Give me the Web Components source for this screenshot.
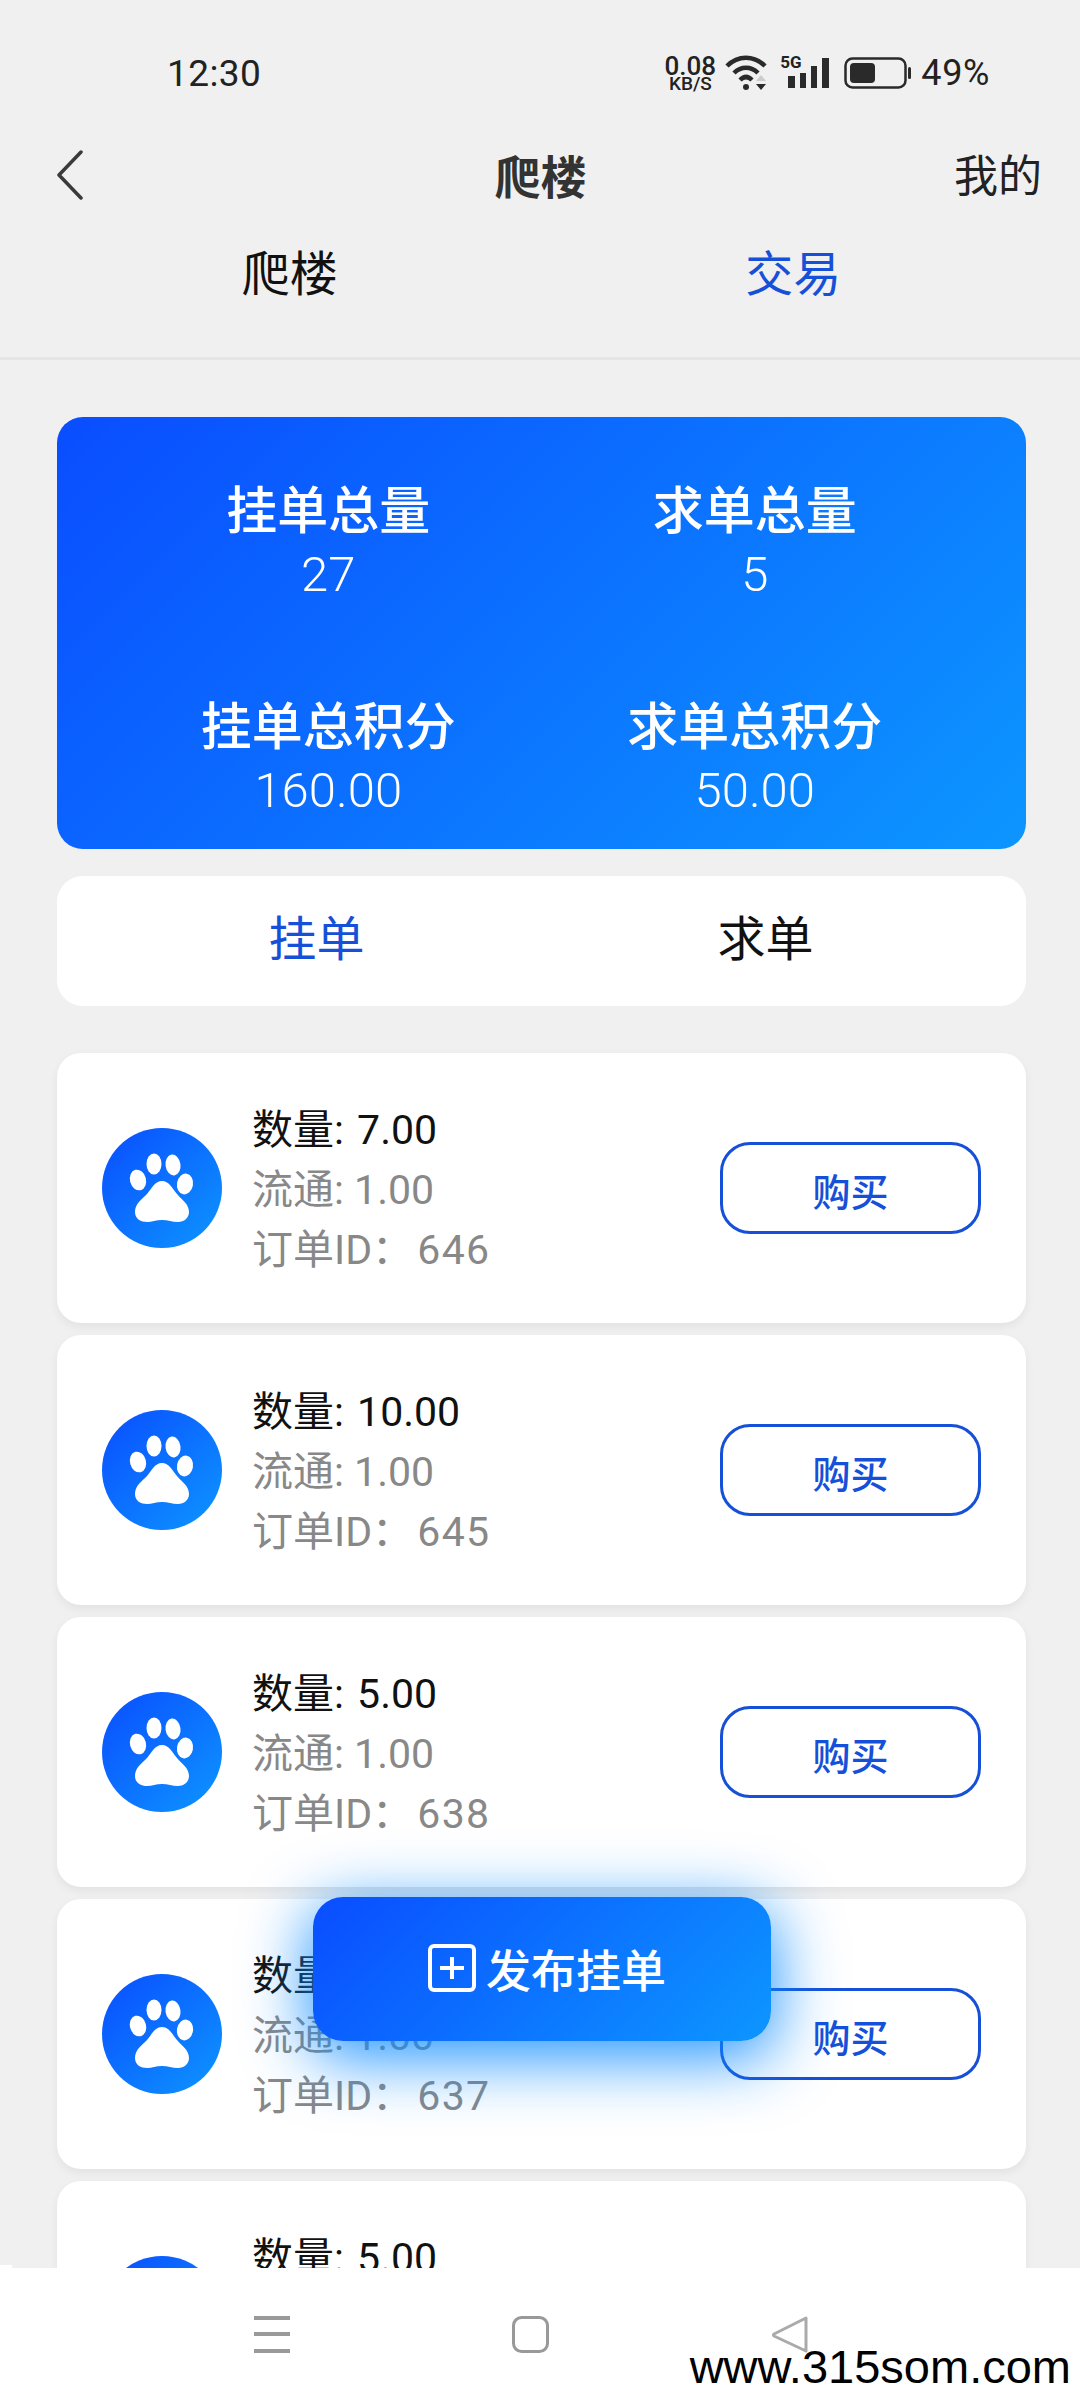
<!DOCTYPE html>
<html>
<head>
<meta charset="utf-8">
<style>
  html, body { margin: 0; padding: 0; background: #f0f0f0; }
</style>
</head>
<body>
<app-screen>
  <status-bar slot="top"></status-bar>
  <nav-header slot="top" title="爬楼" action="我的"></nav-header>
  <top-tabs slot="top">
    <span>爬楼</span>
    <span class="on">交易</span>
  </top-tabs>

  <stats-card>
    <stat-item label="挂单总量" value="27"></stat-item>
    <stat-item label="求单总量" value="5"></stat-item>
    <stat-item label="挂单总积分" value="160.00"></stat-item>
    <stat-item label="求单总积分" value="50.00"></stat-item>
  </stats-card>

  <seg-tabs active="挂单" other="求单"></seg-tabs>

  <order-list>
    <order-card amount="7.00" flow="1.00" order="646"></order-card>
    <order-card amount="10.00" flow="1.00" order="645"></order-card>
    <order-card amount="5.00" flow="1.00" order="638"></order-card>
    <order-card amount="5.00" flow="1.00" order="637"></order-card>
    <order-card amount="5.00" flow="1.00" order="636"></order-card>
  </order-list>

  <publish-button slot="over">发布挂单</publish-button>
  <system-nav slot="bottom"></system-nav>
</app-screen>

<script>
const FONT = '"Roboto", "Noto Sans CJK SC", sans-serif';
const BLUE = '#1650d8';
const GRADIENT = 'linear-gradient(135deg, #0a4dff 0%, #0d96ff 100%)';

class AppScreen extends HTMLElement {
  constructor() {
    super();
    this.attachShadow({ mode: 'open' }).innerHTML = `
      <style>
        :host { display: flex; flex-direction: column; position: relative; width: 1080px; height: 2400px;
                overflow: hidden; background: #f0f0f0; font-family: ${FONT}; }
        #body { flex: 1; min-height: 0; overflow: hidden; padding: 57px 54px 0 57px; }
      </style>
      <slot name="top"></slot>
      <div id="body"><slot></slot></div>
      <slot name="bottom"></slot>
      <slot name="over"></slot>
    `;
  }
}

class StatusBar extends HTMLElement {
  constructor() {
    super();
    this.attachShadow({ mode: 'open' }).innerHTML = `
      <style>
        :host { display: flex; align-items: center; justify-content: space-between; box-sizing: border-box;
                height: 120px; padding: 26px 90px 0 167px; color: #222; }
        #time { font-size: 37px; letter-spacing: .4px; }
        #right { display: flex; align-items: center; }
        #speed { display: flex; flex-direction: column; align-items: center; width: 56px; margin-right: 7px;
                 font-weight: 500; line-height: 1; }
        #speed b { font-weight: 500; font-size: 26px; line-height: 20px; }
        #speed i { font-style: normal; font-size: 19px; line-height: 15px; }
        svg { display: block; }
        #five { position: relative; width: 50px; height: 34px; margin-left: 15px; }
        #five span { position: absolute; left: -4px; top: -4px; font-size: 17px; font-weight: 700; line-height: 20px; }
        #pct { font-size: 36px; letter-spacing: .6px; margin-left: 9px; }
      </style>
      <span id="time">12:30</span>
      <div id="right">
        <div id="speed"><b>0.08</b><i>KB/S</i></div>
        <svg width="44" height="36" viewBox="0 0 44 36">
          <path d="M2 11 C13 0 29 0 40 11" fill="none" stroke="#2a2a2a" stroke-width="4.5"/>
          <path d="M9 18 C16 11 26 11 33 18" fill="none" stroke="#2a2a2a" stroke-width="4.5"/>
          <path d="M15 25 C19 21 23 21 27 25" fill="none" stroke="#2a2a2a" stroke-width="4.5"/>
          <circle cx="21" cy="32" r="3" fill="#2a2a2a"/>
          <path d="M36 20 L41 26 L31 26Z" fill="#ccc"/>
          <path d="M31 29 L41 29 L36 35Z" fill="#2a2a2a"/>
        </svg>
        <div id="five">
          <span>5G</span>
          <svg width="50" height="34" viewBox="0 0 50 34" style="position:absolute;left:0;top:0">
            <rect x="4" y="20" width="7" height="12" fill="#2a2a2a"/>
            <rect x="16" y="17" width="6" height="15" fill="#2a2a2a"/>
            <rect x="27" y="10" width="6" height="22" fill="#2a2a2a"/>
            <rect x="38" y="2" width="7" height="30" fill="#2a2a2a"/>
          </svg>
        </div>
        <svg width="68" height="32" viewBox="0 0 68 32" style="margin-left:10px">
          <rect x="1.5" y="1.5" width="60" height="29" rx="7" fill="none" stroke="#2a2a2a" stroke-width="2.5"/>
          <rect x="6" y="6" width="25" height="20" rx="4" fill="#2a2a2a"/>
          <rect x="64" y="10" width="3" height="12" rx="1.5" fill="#2a2a2a"/>
        </svg>
        <span id="pct">49%</span>
      </div>
    `;
  }
}

class NavHeader extends HTMLElement {
  constructor() {
    super();
    this.attachShadow({ mode: 'open' }).innerHTML = `
      <style>
        :host { display: grid; grid-template-columns: 1fr auto 1fr; align-items: center; box-sizing: border-box;
                height: 110px; padding: 0 38px 0 39px; }
        svg { display: block; margin-left: 17px; }
        #title { font-size: 46px; font-weight: 700; color: #333; padding-bottom: 2px; }
        #action { justify-self: end; font-size: 44px; color: #222; padding-bottom: 5px; }
      </style>
      <svg width="28" height="50" viewBox="0 0 28 50">
        <path d="M25 2 L3 25 L25 48" fill="none" stroke="#3a3a3a" stroke-width="3.5" stroke-linecap="round" stroke-linejoin="round"/>
      </svg>
      <span id="title">${this.getAttribute('title')}</span>
      <span id="action">${this.getAttribute('action')}</span>
    `;
  }
}

class TopTabs extends HTMLElement {
  constructor() {
    super();
    this.attachShadow({ mode: 'open' }).innerHTML = `
      <style>
        :host { display: grid; grid-template-columns: 1fr 1fr; box-sizing: border-box; height: 130px;
                padding: 1px 35px 38px 38px; border-bottom: 3px solid #e5e5e5;
                font-size: 48px; line-height: 88px; text-align: center; color: #111; }
        ::slotted(.on) { color: ${BLUE}; }
      </style>
      <slot></slot>
    `;
  }
}

class StatsCard extends HTMLElement {
  constructor() {
    super();
    this.attachShadow({ mode: 'open' }).innerHTML = `
      <style>
        :host { display: grid; grid-template-columns: 1fr 1fr; align-content: start; row-gap: 90px; box-sizing: border-box;
                height: 432px; padding: 63px 58px 0; border-radius: 26px; background: ${GRADIENT}; color: #fff; }
      </style>
      <slot></slot>
    `;
  }
}

class StatItem extends HTMLElement {
  constructor() {
    super();
    this.attachShadow({ mode: 'open' }).innerHTML = `
      <style>
        :host { display: flex; flex-direction: column; align-items: center; }
        #l { font-size: 51px; font-weight: 500; line-height: 64px; }
        #v { font-size: 49px; font-weight: 300; line-height: 62px; }
      </style>
      <span id="l">${this.getAttribute('label')}</span>
      <span id="v">${this.getAttribute('value')}</span>
    `;
  }
}

class SegTabs extends HTMLElement {
  constructor() {
    super();
    this.attachShadow({ mode: 'open' }).innerHTML = `
      <style>
        :host { display: grid; grid-template-columns: 449px 449px; align-items: center; box-sizing: border-box;
                height: 130px; margin-top: 27px; padding: 0 36px 13px 35px; border-radius: 26px; background: #fff;
                font-size: 48px; text-align: center; color: #111; }
        #a { color: ${BLUE}; }
      </style>
      <span id="a">${this.getAttribute('active')}</span>
      <span>${this.getAttribute('other')}</span>
    `;
  }
}

class OrderList extends HTMLElement {
  constructor() {
    super();
    this.attachShadow({ mode: 'open' }).innerHTML = `
      <style>
        :host { display: flex; flex-direction: column; gap: 12px; margin-top: 47px; }
      </style>
      <slot></slot>
    `;
  }
}

class OrderCard extends HTMLElement {
  constructor() {
    super();
    this.attachShadow({ mode: 'open' }).innerHTML = `
      <style>
        :host { display: flex; align-items: center; flex: none; box-sizing: border-box; height: 270px;
                padding: 0 45px 0 45px; border-radius: 24px; background: #fff;
                box-shadow: 0 4px 10px rgba(0,0,0,.06); }
        #avatar { flex: none; width: 120px; height: 120px; border-radius: 50%; background: ${GRADIENT}; }
        svg { display: block; }
        #text { flex: 1; margin-left: 30px; padding-top: 4px; font-size: 41px; line-height: 60px; color: #888; }
        #text div:first-child { color: #111; word-spacing: 3px; }
        #id { letter-spacing: 1.4px; margin-left: -6px; }
        #buy { flex: none; display: flex; align-items: center; justify-content: center; box-sizing: border-box;
               width: 261px; height: 92px; border: 3px solid ${BLUE}; border-radius: 30px; padding-top: 2px;
               font-size: 38px; font-weight: 500; color: ${BLUE}; }
      </style>
      <div id="avatar">
        <svg width="120" height="120" viewBox="0 0 120 120" fill="#fff">
          <ellipse cx="36" cy="52" rx="8" ry="10.5" transform="rotate(-15 36 52)"/>
          <ellipse cx="52" cy="36" rx="7.5" ry="10.5"/>
          <ellipse cx="71" cy="37" rx="7.5" ry="10.5" transform="rotate(-8 71 37)"/>
          <ellipse cx="83" cy="56" rx="8" ry="10.5" transform="rotate(10 83 56)"/>
          <path d="M60 53 C53 53 50 60 45 66 C39 72 33 76 33 84 C33 91 39 94 45 94 C50 94 54 92 60 92 C66 92 70 94 76 94 C82 94 87 90 87 84 C87 76 80 72 75 66 C70 60 67 53 60 53Z"/>
        </svg>
      </div>
      <div id="text">
        <div>数量: ${this.getAttribute('amount')}</div>
        <div>流通: ${this.getAttribute('flow')}</div>
        <div>订单ID： <span id="id">${this.getAttribute('order')}</span></div>
      </div>
      <div id="buy">购买</div>
    `;
  }
}

class PublishButton extends HTMLElement {
  constructor() {
    super();
    this.attachShadow({ mode: 'open' }).innerHTML = `
      <style>
        :host { position: absolute; left: 313px; top: 1897px; display: flex; align-items: center; justify-content: center;
                gap: 9px; box-sizing: border-box; width: 458px; height: 144px; padding: 0 0 2px 9px; border-radius: 30px;
                background: ${GRADIENT}; box-shadow: 0 14px 64px 4px rgba(13,140,255,.9);
                font-size: 45px; font-weight: 500; color: #fff; }
        svg { display: block; }
      </style>
      <svg width="50" height="50" viewBox="0 0 50 50">
        <rect x="3" y="3" width="44" height="44" rx="4" fill="none" stroke="#fff" stroke-width="4"/>
        <path d="M13 25 H37 M25 14 V36" fill="none" stroke="#fff" stroke-width="4"/>
      </svg>
      <slot></slot>
    `;
  }
}

class SystemNav extends HTMLElement {
  constructor() {
    super();
    this.attachShadow({ mode: 'open' }).innerHTML = `
      <style>
        :host { display: flex; position: relative; flex: none; box-sizing: border-box; height: 132px;
                padding: 48px 0 0 254px; background: #fff; }
        :host::before { content: ""; position: absolute; left: 0; top: -3px; width: 12px; height: 3px; background: #fff; }
        svg { display: block; }
        #mark { position: absolute; right: 9px; bottom: 7px; font-family: "Liberation Sans", sans-serif;
                font-size: 47px; line-height: 52px; color: #000; }
      </style>
      <svg width="38" height="38" viewBox="0 0 38 38" fill="#999">
        <rect x="0" y="0" width="36" height="4"/>
        <rect x="0" y="16" width="36" height="4"/>
        <rect x="0" y="33" width="36" height="4"/>
      </svg>
      <svg width="38" height="38" viewBox="0 0 38 38" style="margin-left:220px">
        <rect x="1.5" y="1.5" width="34" height="34" rx="8" fill="none" stroke="#999" stroke-width="3"/>
      </svg>
      <svg width="38" height="38" viewBox="0 0 38 38" style="margin-left:222px">
        <path d="M34 2 L2 18 Q1 19 2 20 L34 35 Z" fill="none" stroke="#aaa" stroke-width="3" stroke-linejoin="round"/>
      </svg>
      <span id="mark">www.315som.com</span>
    `;
  }
}

customElements.define('app-screen', AppScreen);
customElements.define('status-bar', StatusBar);
customElements.define('nav-header', NavHeader);
customElements.define('top-tabs', TopTabs);
customElements.define('stats-card', StatsCard);
customElements.define('stat-item', StatItem);
customElements.define('seg-tabs', SegTabs);
customElements.define('order-list', OrderList);
customElements.define('order-card', OrderCard);
customElements.define('publish-button', PublishButton);
customElements.define('system-nav', SystemNav);
</script>
</body>
</html>
